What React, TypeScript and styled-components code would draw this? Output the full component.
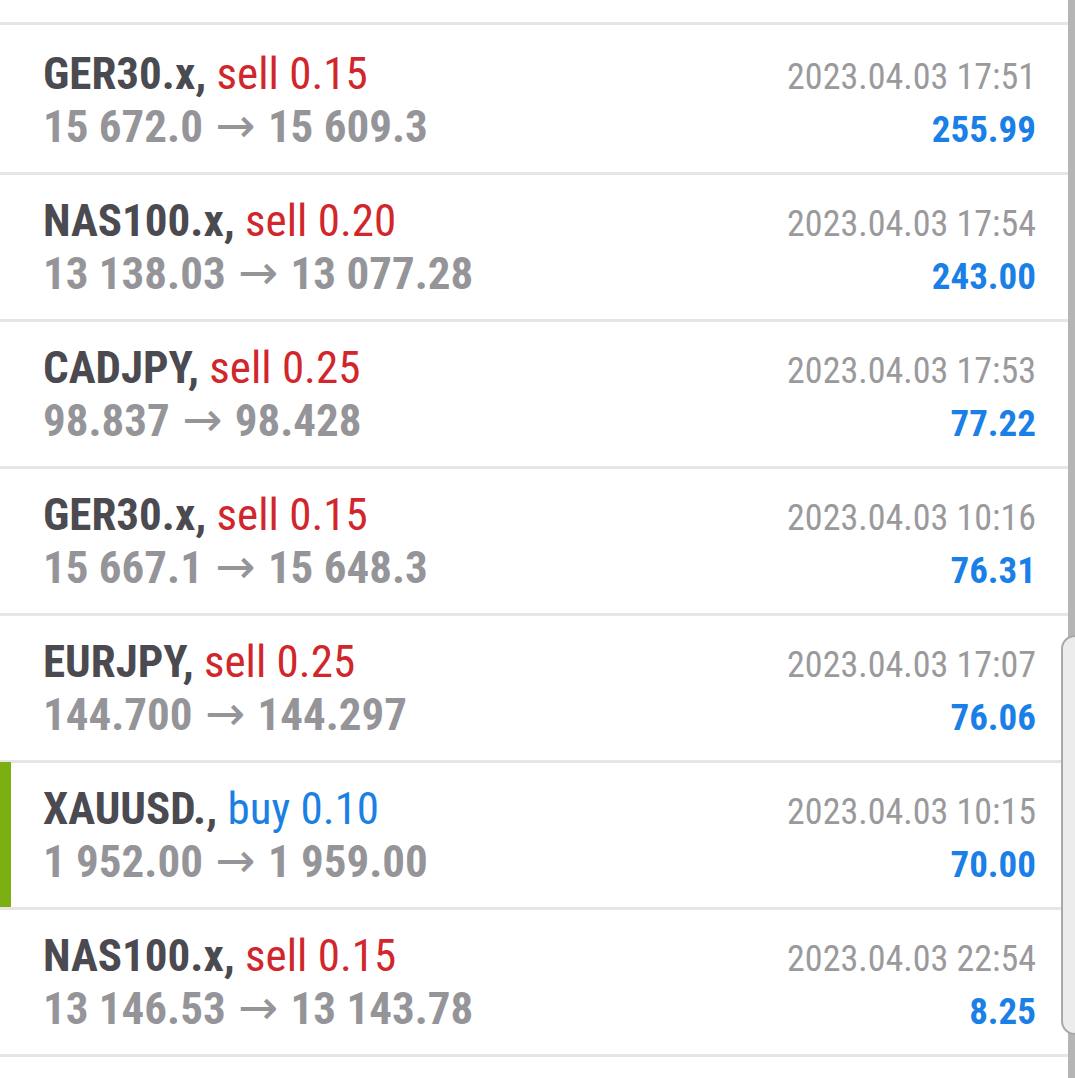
import React from 'react'
import styled, { createGlobalStyle } from 'styled-components'

const GlobalStyle = createGlobalStyle`
  html, body {
    margin: 0;
    padding: 0;
    background: #fff;
  }
  body {
    font-family: 'Roboto Condensed', Roboto, 'Liberation Sans', sans-serif;
  }
`

const Screen = styled.div`
  display: flex;
  width: 1075px;
  height: 1078px;
  overflow: hidden;
  position: relative;
  background: #fff;
`

const List = styled.div`
  flex: 1;
  display: flex;
  flex-direction: column;
`

const TopGap = styled.div`
  height: 22px;
  border-bottom: 3px solid #e6e6e6;
  margin-bottom: 3px;
  flex-shrink: 0;
`

const Row = styled.div<{ $marked?: boolean }>`
  position: relative;
  flex-shrink: 0;
  height: 144px;
  border-bottom: 3px solid #e6e6e6;
  display: grid;
  grid-template-columns: 1fr auto;
  grid-template-rows: 50px 52px;
  align-content: center;
  align-items: baseline;
  padding: 0 32px 0 43px;
  box-sizing: content-box;

  &::before {
    content: '';
    display: ${({ $marked }) => ($marked ? 'block' : 'none')};
    position: absolute;
    left: 0;
    top: -1px;
    bottom: 0;
    width: 11px;
    background: #7cb012;
  }
`

const Title = styled.div`
  font-size: 45px;
  line-height: 50px;
  white-space: nowrap;
`

const Symbol = styled.span`
  font-weight: 700;
  color: #4a4a50;
`

const Side = styled.span<{ $buy?: boolean }>`
  color: ${({ $buy }) => ($buy ? '#1b7fe3' : '#d0262c')};
`

const Prices = styled.div`
  font-size: 45px;
  line-height: 52px;
  font-weight: 700;
  color: #959599;
  white-space: nowrap;
`

const Arrow = styled.span`
  font-family: 'DejaVu Sans', sans-serif;
  font-weight: 400;
  font-size: 48px;
  margin: 0 2px;
  color: #959599;
`

const Time = styled.div`
  font-size: 36px;
  line-height: 50px;
  color: #9a9a9c;
  text-align: right;
  white-space: nowrap;
`

const Profit = styled.div`
  font-size: 37px;
  line-height: 52px;
  font-weight: 700;
  color: #1a7fe6;
  text-align: right;
`

const Track = styled.div`
  width: 7px;
  flex-shrink: 0;
  background: #b5b5b5;
`

const EdgeHandle = styled.div`
  position: absolute;
  top: 635px;
  right: -6px;
  width: 16px;
  height: 396px;
  background: #ececec;
  border: 2px solid #a9a9a9;
  border-radius: 14px 0 0 14px;
`

type Deal = {
  symbol: string
  side: 'sell' | 'buy'
  volume: string
  open: string
  close: string
  time: string
  profit: string
}

const deals: Deal[] = [
  { symbol: 'GER30.x', side: 'sell', volume: '0.15', open: '15 672.0', close: '15 609.3', time: '2023.04.03 17:51', profit: '255.99' },
  { symbol: 'NAS100.x', side: 'sell', volume: '0.20', open: '13 138.03', close: '13 077.28', time: '2023.04.03 17:54', profit: '243.00' },
  { symbol: 'CADJPY', side: 'sell', volume: '0.25', open: '98.837', close: '98.428', time: '2023.04.03 17:53', profit: '77.22' },
  { symbol: 'GER30.x', side: 'sell', volume: '0.15', open: '15 667.1', close: '15 648.3', time: '2023.04.03 10:16', profit: '76.31' },
  { symbol: 'EURJPY', side: 'sell', volume: '0.25', open: '144.700', close: '144.297', time: '2023.04.03 17:07', profit: '76.06' },
  { symbol: 'XAUUSD.', side: 'buy', volume: '0.10', open: '1 952.00', close: '1 959.00', time: '2023.04.03 10:15', profit: '70.00' },
  { symbol: 'NAS100.x', side: 'sell', volume: '0.15', open: '13 146.53', close: '13 143.78', time: '2023.04.03 22:54', profit: '8.25' },
]

const App: React.FC = () => {
  return (
    <>
      <GlobalStyle />
      <Screen>
        <List>
          <TopGap />
          {deals.map((d, i) => (
            <Row key={i} $marked={d.side === 'buy'}>
              <Title>
                <Symbol>{d.symbol},</Symbol> <Side $buy={d.side === 'buy'}>{d.side} {d.volume}</Side>
              </Title>
              <Time>{d.time}</Time>
              <Prices>
                {d.open} <Arrow>→</Arrow> {d.close}
              </Prices>
              <Profit>{d.profit}</Profit>
            </Row>
          ))}
        </List>
        <Track />
        <EdgeHandle />
      </Screen>
    </>
  )
}

export default App
